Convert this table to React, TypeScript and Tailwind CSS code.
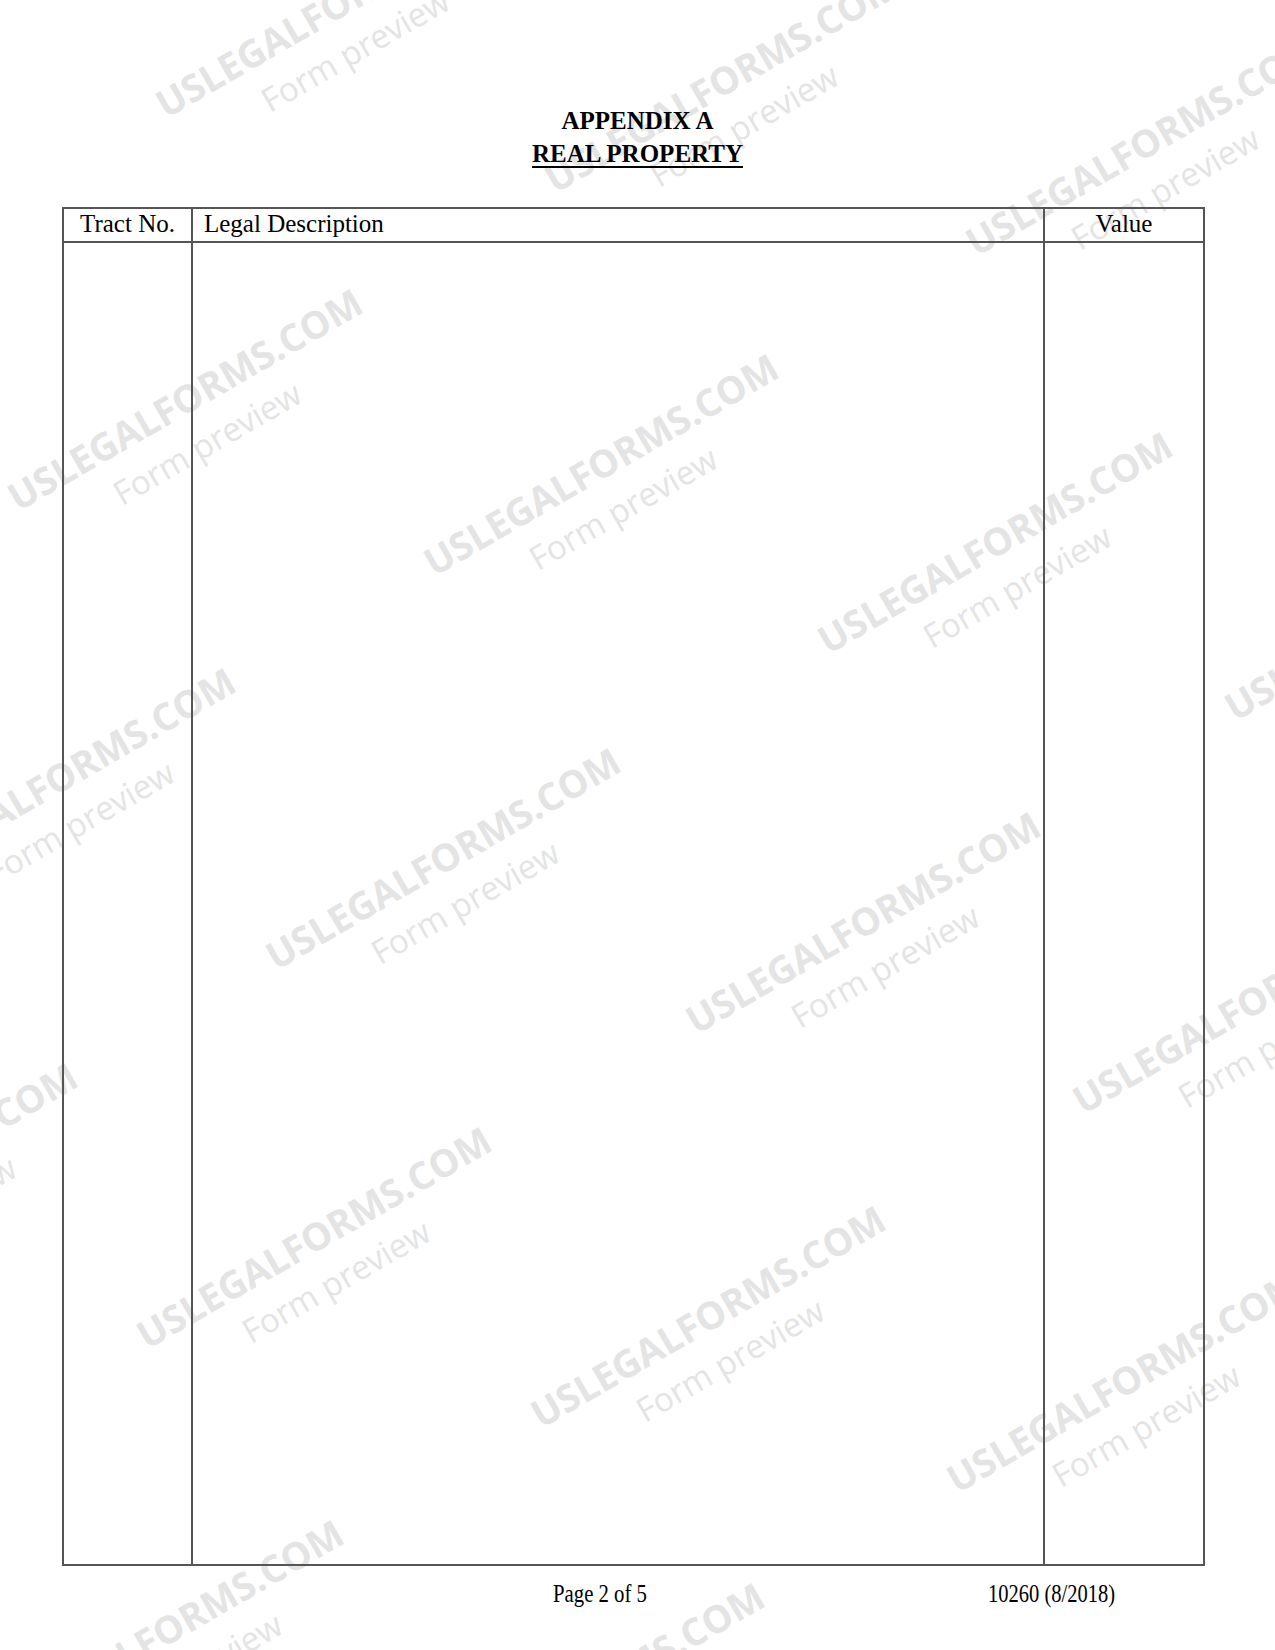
import React from 'react';

// Baseline start points of each "USLEGALFORMS.COM" watermark, in page pixels
const marks: [number, number][] = [
  [166, 119], [555, 194], [976, 257],
  [18, 512], [434, 577], [828, 655], [1235, 722],
  [-109, 891], [276, 971], [696, 1035], [1083, 1115],
  [-267, 1286], [147, 1350], [541, 1429], [957, 1494],
  [-1, 1743], [420, 1806],
];

const Watermark = ({ x, y }: { x: number; y: number }) => (
  <div className="absolute h-0 w-0" style={{ left: x, top: y }}>
    <div className="absolute left-0 top-0 h-0 w-0 origin-top-left -rotate-30 whitespace-nowrap font-['Open_Sans',sans-serif] text-[#e4e4e4]">
      <span className="absolute bottom-[-4px] left-0 text-[38px] font-bold leading-none">USLEGALFORMS.COM</span>
      <span className="absolute left-[93px] top-[18px] text-[33px] leading-none">Form preview</span>
    </div>
  </div>
);

export default function App() {
  return (
    <div className="relative h-[1650px] w-[1275px] overflow-hidden bg-white">
      {/* watermark layer, painted under the form */}
      {marks.map(([x, y], i) => (
        <Watermark key={i} x={x} y={y} />
      ))}

      <div className="relative pt-[104px] font-['Liberation_Serif',serif] text-black">
        {/* Title */}
        <div className="text-center text-[25px] font-bold leading-[33px]">
          <div>APPENDIX A</div>
          <div>
            <span className="underline decoration-2 underline-offset-[4px]">REAL PROPERTY</span>
          </div>
        </div>

        {/* Property table */}
        <div className="ml-[62px] mt-[37px] flex w-[1143px] flex-col border-2 border-[#555]">
          <div className="flex h-[34px] border-b-2 border-[#555] text-[25px] leading-[30px]">
            <div className="w-[127px] text-center">Tract No.</div>
            <div className="w-[852px] border-l-2 border-[#555] pl-[11px]">Legal Description</div>
            <div className="flex-1 border-l-2 border-[#555] text-center">Value</div>
          </div>
          <div className="flex h-[1321px]">
            <div className="w-[127px]" />
            <div className="w-[852px] border-l-2 border-[#555]" />
            <div className="flex-1 border-l-2 border-[#555]" />
          </div>
        </div>

        {/* Footer - narrow face, like the printed form */}
        <div className="mt-[14px] flex pl-[553px] text-[25px] leading-[28px]">
          <div className="w-[435px]">
            <span className="inline-block origin-left scale-x-[0.83] whitespace-nowrap">Page 2 of 5</span>
          </div>
          <div>
            <span className="inline-block origin-left scale-x-[0.82] whitespace-nowrap">10260 (8/2018)</span>
          </div>
        </div>
      </div>
    </div>
  );
}
